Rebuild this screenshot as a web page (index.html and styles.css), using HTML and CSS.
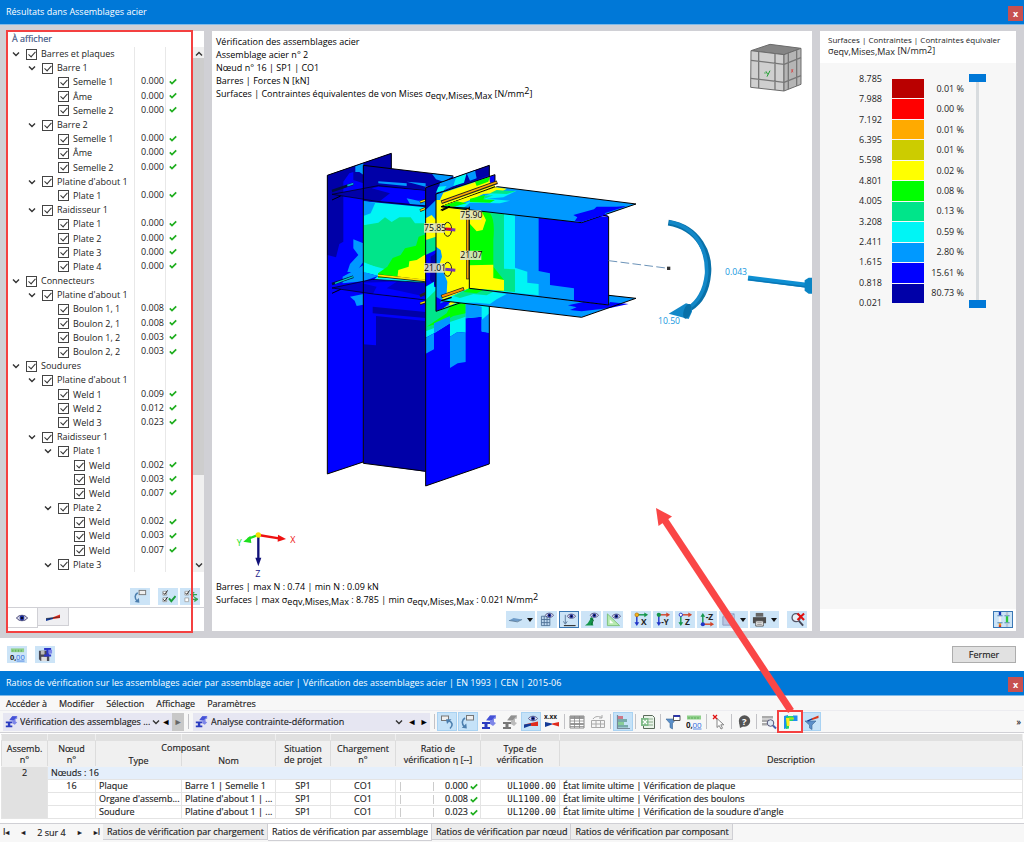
FILE: index.html
```html
<!DOCTYPE html>
<html lang="fr">
<head>
<meta charset="utf-8">
<meta name="viewport" content="width=device-width, initial-scale=1">
<title>Résultats dans Assemblages acier</title>
<link rel="stylesheet" href="styles.css">
</head>
<body>
<svg class="defs" aria-hidden="true">
  <symbol id="ok" viewBox="0 0 8 7"><path d="M.8 3.4 3 5.6 7.2 1.4" fill="none" stroke="#1fae1f" stroke-width="1.7"/></symbol>
  <symbol id="chev" viewBox="0 0 8 8"><path d="M1 2.5 4 5.5 7 2.5" fill="none" stroke="#333" stroke-width="1.4"/></symbol>
  <symbol id="eye" viewBox="0 0 12 8"><path d="M.5 4C3 .4 9 .4 11.5 4 9 7.6 3 7.6.5 4Z" fill="#dde" stroke="#336" stroke-width=".9"/><circle cx="6" cy="4" r="2.4" fill="#1d2f9c"/><circle cx="6" cy="4" r="1" fill="#000"/></symbol>
  <symbol id="diag" viewBox="0 0 16 16"><path d="M1 9.500 8 8.500v1.500L1 12Z" fill="#143a96"/><path d="M8 8.200 15 5.500V9L8 10Z" fill="#e02b1d"/><path d="M1 9.500 15 8" stroke="#222" stroke-width=".6"/></symbol>
  <symbol id="beam" viewBox="0 0 16 16"><path d="M1 8h8v2H6.500v3H9v2H1v-2h2.500v-3H1Z" fill="#2b3cc0"/><path d="M5 6.500 9 1.500h6v3l-2 .5v3l2 1-3 3-3-2V7Z" fill="#7d86e8"/><path d="M9 1.500h6L11 6H5.500Z" fill="#4552d6"/></symbol>
  <symbol id="beamgray" viewBox="0 0 16 16"><path d="M1 8h8v2H6.500v3H9v2H1v-2h2.500v-3H1Z" fill="#777"/><path d="M5 6.500 9 1.500h6v3l-2 .5v3l2 1-3 3-3-2V7Z" fill="#bbb"/><path d="M9 1.500h6L11 6H5.500Z" fill="#909090"/></symbol>
  <symbol id="digits" viewBox="0 0 16 16"><path d="M1 1.500h14v4H1Z" fill="#8fd08a"/><path d="M3 3v2M6 3v2M9 3v2M12 3v2" stroke="#4a9e48" stroke-width=".7"/><text x="0" y="13.500" font-size="8" font-weight="700" fill="#222">0,</text><text x="6.500" y="13.500" font-size="8" fill="#2f6de0">00</text><path d="M7 15h8.500" stroke="#2f6de0" stroke-width=".8"/></symbol>
  <symbol id="arrow-box" viewBox="0 0 16 16"><rect x="6.500" y="1.500" width="7" height="4.500" fill="#eee" stroke="#777"/><path d="M5 4C1.500 6 1.500 10 4.500 13" fill="none" stroke="#4d7fae" stroke-width="1.600"/><path d="M1.800 13.800 6.800 14.600 6.300 9.600Z" fill="#4d7fae"/></symbol>
  <symbol id="box-arrow" viewBox="0 0 16 16"><rect x="2.500" y="2" width="7" height="4.500" fill="#eee" stroke="#777"/><path d="M11 14.500c3.500-3 2.500-6.500-1.500-8" fill="none" stroke="#4d7fae" stroke-width="1.600"/><path d="M7 5.300h5.500L8 10Z" fill="#4d7fae"/></symbol>
  <symbol id="checks" viewBox="0 0 16 16"><path d="M2 2.500h4v4H2ZM2 9.500h4v4H2Z" fill="#fff" stroke="#888" stroke-width=".8"/><path d="M2.500 4 4 5.800 7 1.500M2.500 11 4 12.800 7 8.500" fill="none" stroke="#222"/><path d="M8.500 10 11 13l4.500-5.500" fill="none" stroke="#1a9d3a" stroke-width="2"/></symbol>
  <symbol id="toggles" viewBox="0 0 16 16"><path d="M2 2.500h4v4H2ZM2 9.500h4v4H2Z" fill="#fff" stroke="#999" stroke-width=".8"/><path d="M2.500 4 4 5.800 7 1.500" fill="none" stroke="#222"/><path d="M8 6h7M12 3.500 8.500 6l3.500 2M9 11h6M12 8.800l3.500 2.200-3.500 2.200" fill="none" stroke="#35a050" stroke-width="1.400"/></symbol>
  <symbol id="save" viewBox="0 0 16 16"><path d="M1 4h11v11H3l-2-2Z" fill="#4a4a55"/><path d="M3.500 10.500h6V15h-6Z" fill="#ddd"/><path d="M3 4h4v4H3Z" fill="#bbb"/><path d="M6.500 1H14v2.500h-2.500V8H14v2H6.500V8H9V3.500H6.500Z" fill="#2b35c8"/><path d="M11 3h4v4h-4Z" fill="#7d86e8"/></symbol>
  <symbol id="plane" viewBox="0 0 16 16"><path d="M1 9 6 6.500l9 1.500-5 2Z" fill="#6e9bc8"/><path d="M1 9 10 10.500 15 8" fill="none" stroke="#43617f" stroke-width=".7"/></symbol>
  <symbol id="grid-eye" viewBox="0 0 16 16"><path d="M1.500 4.500h9v10h-9ZM1.500 8h9M1.500 11.300h9M4.500 4.500v10M7.500 4.500v10" fill="#bcd6ee" stroke="#486c92" stroke-width=".9"/><use href="#eye" x="5" y="0" width="10" height="7"/></symbol>
  <symbol id="load-eye" viewBox="0 0 16 16"><path d="M3.500 3v9M1.500 10l2 3 2-3" fill="none" stroke="#59789a"/><path d="M2 14.500h12.500" stroke="#333" stroke-width="1.200"/><use href="#eye" x="5" y="1" width="10" height="7"/></symbol>
  <symbol id="support-eye" viewBox="0 0 16 16"><path d="M8 5.500c-1.500 0-1.500 2.500-1.500 2.500L4 12l-3 2.500h9L9 11l1-4Z" fill="#14964a"/><path d="m7 7 3 1.500-2 5" fill="none" stroke="#075e2a"/><use href="#eye" x="6" y="0" width="10" height="7"/></symbol>
  <symbol id="dim-eye" viewBox="0 0 16 16"><path d="M1.500 2v12.500h13Z" fill="#b6eab0" stroke="#7cc07a"/><path d="M4 8v4h4Z" fill="#fff"/><use href="#eye" x="6" y="1" width="10" height="7"/></symbol>
  <symbol id="axis-x" viewBox="0 0 16 16"><path d="M3 3h9" stroke="#14964a" stroke-width="1.500"/><path d="m11 .5 4 2.500-4 2.500Z" fill="#14964a"/><path d="M3 3v9" stroke="#2035c8" stroke-width="1.500"/><path d="m.5 11 2.500 4 2.500-4Z" fill="#2035c8"/><circle cx="3" cy="3" r="2" fill="#f6b21b" stroke="#b06d00" stroke-width=".7"/><text x="7.500" y="14" font-size="9" font-weight="700" fill="#222">X</text></symbol>
  <symbol id="axis-y" viewBox="0 0 16 16"><path d="M3 3h9" stroke="#d2452a" stroke-width="1.500"/><path d="m11 .5 4 2.500-4 2.500Z" fill="#d2452a"/><path d="M3 3v9" stroke="#2035c8" stroke-width="1.500"/><path d="m.5 11 2.500 4 2.500-4Z" fill="#2035c8"/><circle cx="3" cy="3" r="2.300" fill="#14964a"/><text x="5.500" y="13.500" font-size="8.500" font-weight="700" fill="#222">-Y</text></symbol>
  <symbol id="axis-z" viewBox="0 0 16 16"><path d="M3 3h9" stroke="#d2452a" stroke-width="1.500"/><path d="m11 .5 4 2.500-4 2.500Z" fill="#d2452a"/><path d="M3 3v9" stroke="#14964a" stroke-width="1.500"/><path d="m.5 11 2.500 4 2.500-4Z" fill="#14964a"/><circle cx="3" cy="3" r="1.800" fill="#fff" stroke="#2035c8"/><text x="7.500" y="14" font-size="9" font-weight="700" fill="#222">Z</text></symbol>
  <symbol id="axis-mz" viewBox="0 0 16 16"><path d="M3 13h9" stroke="#d2452a" stroke-width="1.500"/><path d="m11 10.500 4 2.500-4 2.500Z" fill="#d2452a"/><path d="M3 4v9" stroke="#14964a" stroke-width="1.500"/><path d="m.5 5 2.500-4L5.500 5Z" fill="#14964a"/><circle cx="3" cy="13" r="2.200" fill="#2035c8"/><text x="6" y="8.500" font-size="9" font-weight="700" fill="#222">-Z</text></symbol>
  <symbol id="iso" viewBox="0 0 16 16"><path d="M2 5h8v9H2Z" fill="#b9c5e2" stroke="#8d9cc0"/><path d="M2 5 6 2h8l-4 3M14 2v9l-4 3" fill="#dde4f5" stroke="#8d9cc0"/></symbol>
  <symbol id="printer" viewBox="0 0 16 16"><path d="M4 1h8v4H4Z" fill="#666"/><path d="M1 5.500h14V12H1Z" fill="#4c4c4c"/><path d="M4 9.500h8V15H4Z" fill="#fff" stroke="#555"/><path d="M5.500 11.500h5M5.500 13.200h5" stroke="#888"/></symbol>
  <symbol id="zoom-off" viewBox="0 0 16 16"><circle cx="6.500" cy="6" r="4.300" fill="#e8f1f8" stroke="#556" stroke-width="1.400"/><path d="m9.500 9.500 4.500 5" stroke="#445" stroke-width="2"/><path d="m8 1.500 7 7M15 1.500l-7 7" stroke="#e01010" stroke-width="2.200"/></symbol>
  <symbol id="limits" viewBox="0 0 16 16"><path d="M3 4.500h2.500V11H3Z" fill="#f3f3f3"/><path d="M3 0h2.500v3.500H3Z" fill="#1634b8"/><path d="M3 12h2.500v2H3Z" fill="#f90"/><path d="M3 14h2.500v2H3Z" fill="#d8381b"/><path d="M1.500 4h5.500M1.500 11.500h5.500M9 4h5.500M9 11.500h5.500" stroke="#4d7fae"/><path d="M10.500 0H13v3.500h-2.500ZM10.500 12H13v4h-2.500Z" fill="#b9c6d2"/><path d="M10.500 4.500H13V11h-2.500Z" fill="#2bc93d"/></symbol>
  <symbol id="diag-eye" viewBox="0 0 16 16"><path d="M1 10.500 15 7.500V12H9Z" fill="#e02b1d"/><path d="M1 10.500 8 9.500v2L1 14Z" fill="#143a96"/><use href="#eye" x="5" y="1" width="10" height="7"/></symbol>
  <symbol id="diag-xxx" viewBox="0 0 16 16"><path d="M8 9.500 15 8v4.500L8 10.500Z" fill="#e02b1d"/><path d="M1 8v5l7-2.500v-1Z" fill="#143a96"/><text x="0" y="5" font-size="6.500" font-weight="700" fill="#222">x.xx</text></symbol>
  <symbol id="table" viewBox="0 0 16 16"><path d="M1 2h14v12H1Z" fill="#fff" stroke="#888"/><path d="M1 2h14v3H1ZM1 9h14v2H1Z" fill="#999"/><path d="M5.500 2v12M10.500 2v12M1 7h14M1 12.500h14" stroke="#888" stroke-width=".8"/></symbol>
  <symbol id="table-new" viewBox="0 0 16 16"><path d="M1.500 6.500h13v7h-13ZM1.500 10h13M6 6.500v7M10.500 6.500v7" fill="#f5f5f5" stroke="#aaa"/><path d="M3 5c2-3 6-3 9-1.500M12 1v3H9" fill="none" stroke="#aaa"/></symbol>
  <symbol id="rows" viewBox="0 0 16 16"><path d="M2.500 1v13.500H15" fill="none" stroke="#789" stroke-width="1.200"/><path d="M3 2h5v3H3Z" fill="#c78"/><path d="M3 5h9v3H3ZM3 11h10v2.500H3Z" fill="#7aa"/><path d="M3 8h6v3H3Z" fill="#8c9"/></symbol>
  <symbol id="sheet" viewBox="0 0 16 16"><path d="M3.500 1.500h9l2 2v11h-11Z" fill="#e9f3e9" stroke="#5a6a5a"/><path d="M6 5h7M6 8h7M6 11h7" stroke="#8aab8a"/><path d="M1 4h7.500v8H1Z" fill="#7fba88"/><path d="m3 6 4 4M7 6l-4 4" stroke="#fff" stroke-width="1.200"/></symbol>
  <symbol id="funnel-box" viewBox="0 0 16 16"><path d="M1 5h10L7.500 9.500V15L5 13.500v-4Z" fill="#5b8fc9" stroke="#3a6796" stroke-width=".6"/><path d="M8.500 1.500h6.500v5H8.500Z" fill="#fff" stroke="#555"/><path d="M8.500 1h6.500v2H8.500Z" fill="#2b35a8"/></symbol>
  <symbol id="cursor" viewBox="0 0 16 16"><path d="M6 4.500v9l2.200-2 1.800 3.500 1.500-.8-1.700-3.400h3Z" fill="#fff" stroke="#777" stroke-width=".9"/><path d="m2 1 4 4M6 1 2 5" stroke="#e01010" stroke-width="1.300"/></symbol>
  <symbol id="help" viewBox="0 0 16 16"><circle cx="8.500" cy="7" r="5.700" fill="#555"/><path d="m3 8 1 6 4-2Z" fill="#555"/><text x="6" y="10.500" font-size="9.500" font-weight="700" fill="#fff">?</text></symbol>
  <symbol id="table-search" viewBox="0 0 16 16"><path d="M1 2h11v2.500H1ZM1 5.500h7V8H1ZM1 9h5v2.500H1Z" fill="#aaa"/><circle cx="9.500" cy="9" r="3.300" fill="#dce8f5" stroke="#557"/><path d="m12 11.500 3 3" stroke="#4a5fb0" stroke-width="2"/></symbol>
  <symbol id="joint" viewBox="0 0 16 16"><path d="M2 2 6 1v13l-4 1Z" fill="#1f8ff0"/><path d="M6 2h9v5H7v7.500L4 15V3Z" fill="#25d36a"/><path d="M4 4h3.500v8H5Z" fill="#ffe81f"/><path d="M11 1.500h4.500V7H11Z" fill="#1f8ff0"/><path d="M7 3.500h5v2H7Z" fill="#a6e61d"/></symbol>
  <symbol id="funnel-diag" viewBox="0 0 16 16"><path d="M2 7h11L9 11v4.500L6.500 14v-3Z" fill="#5b8fc9" stroke="#3a6796" stroke-width=".6"/><path d="M4 6.500 9.500 4v1.500L5 7.500Z" fill="#143a96"/><path d="M9 4.200 15.500 1.500v2.500L9 6Z" fill="#d8381b"/></symbol>
</svg>

<main class="app">
<section class="results">
  <header class="titlebar"><h1>Résultats dans Assemblages acier</h1><button class="close" aria-label="Fermer la fenêtre">x</button></header>
  <div class="workspace">
    <aside class="panel nav">
      <h2>À afficher</h2>
      <div class="tree-area">
        <ul class="tree">
          <li><svg class="chev"><use href="#chev"/></svg><label><input type="checkbox" checked>Barres et plaques</label></li>
          <li class="l1"><svg class="chev"><use href="#chev"/></svg><label><input type="checkbox" checked>Barre 1</label></li>
          <li class="l2"><label><input type="checkbox" checked>Semelle 1</label><output>0.000</output><svg class="ok"><use href="#ok"/></svg></li>
          <li class="l2"><label><input type="checkbox" checked>Âme</label><output>0.000</output><svg class="ok"><use href="#ok"/></svg></li>
          <li class="l2"><label><input type="checkbox" checked>Semelle 2</label><output>0.000</output><svg class="ok"><use href="#ok"/></svg></li>
          <li class="l1"><svg class="chev"><use href="#chev"/></svg><label><input type="checkbox" checked>Barre 2</label></li>
          <li class="l2"><label><input type="checkbox" checked>Semelle 1</label><output>0.000</output><svg class="ok"><use href="#ok"/></svg></li>
          <li class="l2"><label><input type="checkbox" checked>Âme</label><output>0.000</output><svg class="ok"><use href="#ok"/></svg></li>
          <li class="l2"><label><input type="checkbox" checked>Semelle 2</label><output>0.000</output><svg class="ok"><use href="#ok"/></svg></li>
          <li class="l1"><svg class="chev"><use href="#chev"/></svg><label><input type="checkbox" checked>Platine d'about 1</label></li>
          <li class="l2"><label><input type="checkbox" checked>Plate 1</label><output>0.000</output><svg class="ok"><use href="#ok"/></svg></li>
          <li class="l1"><svg class="chev"><use href="#chev"/></svg><label><input type="checkbox" checked>Raidisseur 1</label></li>
          <li class="l2"><label><input type="checkbox" checked>Plate 1</label><output>0.000</output><svg class="ok"><use href="#ok"/></svg></li>
          <li class="l2"><label><input type="checkbox" checked>Plate 2</label><output>0.000</output><svg class="ok"><use href="#ok"/></svg></li>
          <li class="l2"><label><input type="checkbox" checked>Plate 3</label><output>0.000</output><svg class="ok"><use href="#ok"/></svg></li>
          <li class="l2"><label><input type="checkbox" checked>Plate 4</label><output>0.000</output><svg class="ok"><use href="#ok"/></svg></li>
          <li><svg class="chev"><use href="#chev"/></svg><label><input type="checkbox" checked>Connecteurs</label></li>
          <li class="l1"><svg class="chev"><use href="#chev"/></svg><label><input type="checkbox" checked>Platine d'about 1</label></li>
          <li class="l2"><label><input type="checkbox" checked>Boulon 1, 1</label><output>0.008</output><svg class="ok"><use href="#ok"/></svg></li>
          <li class="l2"><label><input type="checkbox" checked>Boulon 2, 1</label><output>0.008</output><svg class="ok"><use href="#ok"/></svg></li>
          <li class="l2"><label><input type="checkbox" checked>Boulon 1, 2</label><output>0.003</output><svg class="ok"><use href="#ok"/></svg></li>
          <li class="l2"><label><input type="checkbox" checked>Boulon 2, 2</label><output>0.003</output><svg class="ok"><use href="#ok"/></svg></li>
          <li><svg class="chev"><use href="#chev"/></svg><label><input type="checkbox" checked>Soudures</label></li>
          <li class="l1"><svg class="chev"><use href="#chev"/></svg><label><input type="checkbox" checked>Platine d'about 1</label></li>
          <li class="l2"><label><input type="checkbox" checked>Weld 1</label><output>0.009</output><svg class="ok"><use href="#ok"/></svg></li>
          <li class="l2"><label><input type="checkbox" checked>Weld 2</label><output>0.012</output><svg class="ok"><use href="#ok"/></svg></li>
          <li class="l2"><label><input type="checkbox" checked>Weld 3</label><output>0.023</output><svg class="ok"><use href="#ok"/></svg></li>
          <li class="l1"><svg class="chev"><use href="#chev"/></svg><label><input type="checkbox" checked>Raidisseur 1</label></li>
          <li class="l2 parent"><svg class="chev"><use href="#chev"/></svg><label><input type="checkbox" checked>Plate 1</label></li>
          <li class="l3"><label><input type="checkbox" checked>Weld</label><output>0.002</output><svg class="ok"><use href="#ok"/></svg></li>
          <li class="l3"><label><input type="checkbox" checked>Weld</label><output>0.003</output><svg class="ok"><use href="#ok"/></svg></li>
          <li class="l3"><label><input type="checkbox" checked>Weld</label><output>0.007</output><svg class="ok"><use href="#ok"/></svg></li>
          <li class="l2 parent"><svg class="chev"><use href="#chev"/></svg><label><input type="checkbox" checked>Plate 2</label></li>
          <li class="l3"><label><input type="checkbox" checked>Weld</label><output>0.002</output><svg class="ok"><use href="#ok"/></svg></li>
          <li class="l3"><label><input type="checkbox" checked>Weld</label><output>0.003</output><svg class="ok"><use href="#ok"/></svg></li>
          <li class="l3"><label><input type="checkbox" checked>Weld</label><output>0.007</output><svg class="ok"><use href="#ok"/></svg></li>
          <li class="l2 parent"><svg class="chev"><use href="#chev"/></svg><label><input type="checkbox" checked>Plate 3</label></li>
        </ul>
        <div class="scroll"><svg class="chev up"><use href="#chev"/></svg><div class="track"><div class="thumb"></div></div><svg class="chev"><use href="#chev"/></svg></div>
      </div>
      <div class="nav-tools">
        <button class="tool" aria-label="Réduire"><svg><use href="#arrow-box"/></svg></button>
        <button class="tool" aria-label="Tout cocher"><svg><use href="#checks"/></svg></button>
        <button class="tool" aria-label="Inverser"><svg><use href="#toggles"/></svg></button>
      </div>
      <div class="nav-tabs">
        <button class="nav-tab active" aria-label="Affichage"><svg class="eye"><use href="#eye"/></svg></button>
        <button class="nav-tab" aria-label="Diagrammes"><svg><use href="#diag"/></svg></button>
      </div>
      <div class="mark mark-nav"></div>
    </aside>

    <section class="panel view">
      <div class="viewport">
        <svg class="model" viewBox="212 31 600 578" role="img" aria-label="Modèle de l'assemblage">
          <g transform="translate(310 140) scale(.3333)" stroke-linejoin="round">
            <!-- rear column flange -->
            <path fill="#0000ff" d="M52 106 244 40V250H160V966L52 1002Z"/>
            <path fill="#0000a8" d="M52 106 244 40V110L160 100V140L100 160V305L88 312 78 352 52 345Z"/>
            <path fill="#0000ff" d="M100 125 118 100 130 96V120L160 130V160L100 170Z"/>
            <path fill="#0099ff" d="M136 78 160 69V104L148 96 136 96ZM130 298 160 310V366L138 396H112L120 372 145 345 130 325Z"/>
            <path fill="#0099ff" d="M98 410 160 376V424L98 430ZM120 470 160 462V494L140 498 134 482Z"/>
            <!-- column web -->
            <path fill="#0000a8" d="M160 76 430 108V140H347V995L160 970Z"/>
            <path fill="#0099ff" d="M365 100 430 108 400 125 378 118ZM290 125 347 130V140Z"/>
            <path fill="#0099ff" d="M205 124 290 130V138L205 130Z"/>
            <path fill="#00f5f5" d="M160 184 347 202V440H160Z"/>
            <path fill="#0099ff" d="M160 184 196 188 182 220 160 228Z"/>
            <path fill="#00e58a" d="M160 256 205 248 225 232 245 246 268 232 302 232 315 250 347 250V420L160 370Z"/>
            <path fill="#00ff00" d="M347 283 326 290 318 317 285 325 272 345 248 354 232 380 204 400V414H347Z"/>
            <path fill="#ffff00" d="M347 343 320 360 298 364 296 380 265 390 262 414 347 422Z"/>
            <path fill="#0000ff" d="M160 395 204 408 180 430 347 470V543L198 528V616L160 613Z"/>
            <path fill="#0099ff" d="M160 395 204 408 160 424Z"/>
            <path fill="#00f5f5" d="M160 366 195 380 204 405 160 396Z"/>
            <path fill="#0000a8" d="M188 500 347 516V534L188 520Z"/>
            <!-- stiffeners -->
            <path fill="#0000a8" stroke="#000" stroke-width="2" d="M66 163 205 137 347 152V198L200 184Z"/>
            <path fill="#0000ff" d="M205 140 347 152V195L210 183 240 160 185 145Z"/>
            <path fill="#0000c8" stroke="#000" stroke-width="2" d="M66 444 188 418 347 428V480L190 462Z"/>
            <path fill="#0000ff" d="M150 428 260 425 230 445 280 455 347 470V478L190 460 200 440Z"/>
            <path fill="#0099ff" d="M290 175 325 182 347 180V196L300 192Z"/>
            <path stroke="#001040" stroke-width="8" d="M66 153 130 131M66 432 130 410"/>
            <path stroke="#00a8d8" stroke-width="5" d="M112 137 130 131"/><path stroke="#00c8b8" stroke-width="4" d="M75 430 130 410"/>
            <path stroke="#000" stroke-width="3" d="M66 180 92 168M66 460 92 448M160 76V970"/>
            <path stroke="#222" stroke-width="8" d="M204 407 347 423"/><path stroke="#ffe600" stroke-width="5" d="M204 406 347 421"/>
            <path stroke="#222" stroke-width="8" d="M330 187 347 180M330 212 347 205M330 468 347 460M330 492 347 486"/><path stroke="#ffe600" stroke-width="4" d="M331 186 345 181M331 211 345 206M331 490 345 486"/>
            <path fill="none" stroke="#000" stroke-width="3" d="M52 106 244 40V86M160 76 430 108M52 106V1002L160 966M160 970 347 994"/>
            <!-- front column flange -->
            <path fill="#0000ff" d="M347 143 538 76V972L347 1038Z"/>
            <path fill="#0000a8" d="M347 143 538 76V106L378 162V200L347 210Z"/>
            <path fill="#0099ff" d="M390 128 440 110 450 130 400 152 385 150ZM470 100 495 90 500 115 480 122ZM347 210 378 180V240L360 262 347 260Z"/>
            <path fill="#00f5f5" d="M438 112 470 100 462 128 430 138ZM385 140 410 138 400 152 378 158ZM347 258 378 240V330L347 330Z"/>
            <path fill="#ffff00" d="M347 235 365 225 378 240V300L360 312 347 300Z"/>
            <path fill="#00e58a" d="M347 300 378 290V330L347 345Z"/>
            <path fill="#0000a8" d="M362 350 378 340V440L360 420Z"/>
            <path fill="#00f5f5" d="M347 440 372 425V440L538 470V578L515 574V530L467 535V578L443 576 420 590V550L372 580 347 593Z"/>
            <path fill="#00e58a" d="M347 480 378 450V510L467 480V530L420 546 347 574V540Z"/>
            <path fill="#00ff00" d="M420 500 467 485V520L430 528 400 545 350 560 410 520Z"/>
            <path fill="#0099ff" d="M347 594 372 580V550L420 528V550L372 580V628L347 641ZM420 590 443 576 467 578V666L443 670 420 684ZM467 490 515 500V530L467 535ZM515 540V575L538 578V520Z"/>
            <path fill="none" stroke="#000" stroke-width="3" d="M347 143 538 76V972L347 1038Z"/>
            <!-- end plate -->
            <path fill="#ffff00" d="M378 162 555 104V440L378 514Z"/>
            <path fill="#0099ff" d="M378 162 540 108 520 118 400 158 390 180H378ZM378 320 392 330 396 350 386 380 400 395 412 425 410 460 396 475 420 495 378 514Z"/>
            <path fill="#0000ff" d="M538 110 555 104V128H540ZM378 470 395 480 378 514ZM378 495 440 470 400 505 378 514Z"/>
            <path fill="#00ff00" d="M495 125 540 110 535 125 500 138ZM450 480 478 465V478L440 494Z"/>
            <path fill="none" stroke="#000" stroke-width="3" d="M555 128V104L378 162V514L470 482"/>
            <path fill="none" stroke="#222" stroke-width="11" d="M394 187 562 127"/><path stroke="#ffaa00" stroke-width="5" d="M396 186 560 127"/>
            <path fill="none" stroke="#000" stroke-width="3" d="M394 200 555 140M392 210 420 198"/>
            <!-- beam web -->
            <path fill="#0000ff" d="M478 200 896 230V495L478 445Z"/>
            <path fill="#0099ff" d="M478 200 686 230V393L720 400V435L792 445V482L478 445Z"/>
            <path fill="#00f5f5" d="M478 200 615 220V383L652 395V428L686 432V466L478 445Z"/>
            <path fill="#00e58a" d="M478 200 582 222V386L615 388V456L478 445Z"/>
            <path fill="#00ff00" d="M478 200 540 220Q556 240 550 300V380L582 420V452L478 445Z"/>
            <path fill="#ffff00" d="M478 210 515 214 528 240 518 270 500 274 478 250ZM478 376 550 374V414L582 420V452L478 445Z"/>
            <!-- beam top flange -->
            <path fill="#0099ff" stroke="#000" stroke-width="3" d="M394 200 562 140 978 192 815 248Z"/>
            <path fill="#ffff00" d="M400 197 556 142 590 146 570 158 520 162 490 176 430 200Z"/>
            <path fill="#00f5f5" d="M510 173 545 160 620 152 580 172 530 176 600 182 570 190 480 188 460 204 430 202Z"/>
            <path fill="#00e58a" d="M560 150 618 154 590 162 540 160ZM510 168 550 166 520 178Z"/>
            <path fill="#00ff00" d="M480 176 525 165 520 178 555 180 540 188 480 186ZM400 197 440 184 470 190 430 200Z"/>
            <path fill="#0000ff" d="M815 246 870 229 895 228 884 220 940 202 948 198 920 200 860 200 852 208 790 225 802 232 794 244Z"/>
            <!-- beam bottom flange -->
            <path fill="#0099ff" d="M394 482 478 445 896 495V466L978 475 815 532Z"/>
            <path fill="#00f5f5" d="M394 482 478 445 590 462 560 478 540 492 500 488 450 488Z"/>
            <path fill="#00e58a" d="M478 445 550 455 530 466 490 462 450 474 430 468Z"/>
            <path fill="#00ff00" d="M478 445 520 450 500 460 460 456Z"/>
            <path fill="#0000ff" d="M815 514 900 504 956 492 900 486 896 495 820 486 774 496 800 502 780 510Z"/>
            <path fill="none" stroke="#000" stroke-width="3" d="M478 445 896 495V230L880 226M896 466 978 475 815 532 394 482M478 200V445"/>
            <path stroke="#222" stroke-width="10" d="M394 470 462 446"/><path stroke="#ff8c00" stroke-width="6" d="M396 469 460 447"/>
            <path stroke="#222" stroke-width="9" d="M473 205V418"/><path stroke="#f59a00" stroke-width="5" d="M473 207V416"/>
            <path fill="none" stroke="#000" stroke-width="4" d="M394 482 425 472M394 200 478 205M395 212 420 200"/>
            <!-- bolts and result labels -->
            <g fill="none" stroke="#222" stroke-width="3"><ellipse cx="413" cy="268" rx="12" ry="21"/><ellipse cx="413" cy="388" rx="12" ry="21"/></g>
            <path stroke="#7a36b0" stroke-width="9" d="M406 267 436 270M406 388 436 391"/><path stroke="#d80030" stroke-width="7" d="M406 267H424"/>
            <g fill="#e4e4c8" fill-opacity=".88"><path d="M342 250h62v28h-62ZM450 211h64v28h-64ZM450 332h64v28h-64ZM342 370h62v28h-62Z"/></g>
            <g class="label"><text x="342" y="273">75.85</text><text x="451" y="234">75.90</text><text x="451" y="355">21.07</text><text x="342" y="393">21.01</text></g>
          </g>
          <!-- member axis, moment and axial force -->
          <g transform="translate(480 170) scale(.3333)">
            <path d="M386 272 565 295" stroke="#6b93b8" stroke-width="3" stroke-dasharray="26 10"/><path d="M561 290h10v10h-10Z" fill="#333"/>
            <path d="M565 158C660 174 690 255 685 310 680 370 655 400 630 415" fill="none" stroke="#0870a8" stroke-width="17"/>
            <path d="M568 156C656 172 682 250 680 310 675 365 650 398 628 412" fill="none" stroke="#1288c8" stroke-width="11"/>
            <path d="M566 431 618 400Q640 404 636 425L626 447Z" fill="#1288c8"/><ellipse cx="622" cy="424" rx="11" ry="23" transform="rotate(18 622 424)" fill="#0870a8"/>
            <path d="M804 324 980 346" stroke="#0e8fd2" stroke-width="15"/><path d="M804 329 980 351" stroke="#0a76b4" stroke-width="4"/><path d="M974 331 986 323H998V371H986L974 362Z" fill="#0a84c4"/>
            <g class="force"><text x="735" y="314">0.043</text><text x="534" y="463">10.50</text></g>
          </g>
          <!-- coordinate triad -->
          <g transform="translate(210 500) scale(.3333)">
            <path d="M145 105 207 115" stroke="#e11" stroke-width="7"/><path d="m204 104 24 13-25 8Z" fill="#e11"/>
            <path d="m145 105-32 12" stroke="#1de01d" stroke-width="7"/><path d="m121 107-21 18 24 4Z" fill="#1de01d"/>
            <path d="M145 105v70" stroke="#101078" stroke-width="7"/><path d="m136 173 9 26 9-26Z" fill="#101078"/><circle cx="145" cy="105" r="8" fill="#f4e000"/>
            <g class="axis"><text x="241" y="128" fill="#e11">X</text><text x="80" y="137" fill="#1de01d">Y</text><text x="136" y="231" fill="#20208a">Z</text></g>
          </g>
          <!-- view cube -->
          <g transform="translate(740 0) scale(.3333)" stroke="#6b6b6b" stroke-width="3" stroke-linejoin="round">
            <path d="M33 152 90 133 183 145 132 164Z" fill="#858585"/><path d="M33 152 132 164V273L32 262Z" fill="#cfcfcf"/><path d="M132 164 183 145V253L132 273Z" fill="#b5b5b5"/>
            <path d="M33 181 132 193 183 173M32 235 132 247 183 227M56 155V264M105 161V270M145 159V268M170 150V258" fill="none" stroke="#777" stroke-width="4"/>
            <path d="m78 214 5 9M90 212l-9 18M73 219h4" fill="none" stroke="#20a030" stroke-width="3"/><path d="m154 208 5 9m0-10-5 11" stroke="#d33" stroke-width="2"/>
          </g>
        </svg>
        <div class="info">
          <p>Vérification des assemblages acier</p><p>Assemblage acier n° 2</p><p>Nœud n° 16 | SP1 | CO1</p><p>Barres | Forces N [kN]</p>
          <p>Surfaces | Contraintes équivalentes de von Mises σ<sub>eqv,Mises,Max</sub> [N/mm<sup>2</sup>]</p>
        </div>
        <div class="info">
          <p>Barres | max N : 0.74 | min N : 0.09 kN</p>
          <p>Surfaces | max σ<sub>eqv,Mises,Max</sub> : 8.785 | min σ<sub>eqv,Mises,Max</sub> : 0.021 N/mm<sup>2</sup></p>
        </div>
      </div>
      <div class="view-tools">
        <button class="tool wide" aria-label="Plan"><svg><use href="#plane"/></svg><i></i></button>
        <button class="tool" aria-label="Maillage"><svg><use href="#grid-eye"/></svg></button>
        <button class="tool on" aria-label="Charges"><svg><use href="#load-eye"/></svg></button>
        <button class="tool" aria-label="Appuis"><svg><use href="#support-eye"/></svg></button>
        <button class="tool" aria-label="Cotes"><svg><use href="#dim-eye"/></svg></button>
        <span class="space"></span>
        <button class="tool" aria-label="Vue X"><svg><use href="#axis-x"/></svg></button>
        <button class="tool" aria-label="Vue -Y"><svg><use href="#axis-y"/></svg></button>
        <button class="tool" aria-label="Vue Z"><svg><use href="#axis-z"/></svg></button>
        <button class="tool" aria-label="Vue -Z"><svg><use href="#axis-mz"/></svg></button>
        <button class="tool wide" aria-label="Vue isométrique"><svg><use href="#iso"/></svg><i></i></button>
        <button class="tool wide" aria-label="Imprimer"><svg><use href="#printer"/></svg><i></i></button>
        <span class="space"></span>
        <button class="tool" aria-label="Réinitialiser le zoom"><svg><use href="#zoom-off"/></svg></button>
      </div>
    </section>

    <aside class="panel scale">
      <div class="scale-head"><p class="quantity">Surfaces | Contraintes | Contraintes équivaler</p><p>σ<sub>eqv,Mises,Max</sub> [N/mm<sup>2</sup>]</p></div>
      <div class="scale-body">
        <div class="legend">
          <ul class="values"><li>8.785</li><li>7.988</li><li>7.192</li><li>6.395</li><li>5.598</li><li>4.801</li><li>4.005</li><li>3.208</li><li>2.411</li><li>1.615</li><li>0.818</li><li>0.021</li></ul>
          <ul class="swatches"><li class="c1"></li><li class="c2"></li><li class="c3"></li><li class="c4"></li><li class="c5"></li><li class="c6"></li><li class="c7"></li><li class="c8"></li><li class="c9"></li><li class="c10"></li><li class="c11"></li></ul>
          <ul class="shares"><li>0.01 %</li><li>0.00 %</li><li>0.01 %</li><li>0.01 %</li><li>0.02 %</li><li>0.08 %</li><li>0.13 %</li><li>0.59 %</li><li>2.80 %</li><li>15.61 %</li><li>80.73 %</li></ul>
          <div class="range"><input type="range" min="0" max="100" value="100" aria-label="Limite supérieure"><input type="range" min="0" max="100" value="0" aria-label="Limite inférieure"></div>
        </div>
      </div>
      <div class="scale-foot"><button class="tool on" aria-label="Options de l'échelle"><svg><use href="#limits"/></svg></button></div>
    </aside>
  </div>
  <footer class="dialog-foot">
    <button class="tool" aria-label="Unités"><svg><use href="#digits"/></svg></button>
    <button class="tool" aria-label="Enregistrer"><svg><use href="#save"/></svg></button>
    <button class="push">Fermer</button>
  </footer>
</section>

<section class="ratios">
  <header class="titlebar"><h1>Ratios de vérification sur les assemblages acier par assemblage acier | Vérification des assemblages acier | EN 1993 | CEN | 2015-06</h1><button class="close" aria-label="Fermer le tableau">x</button></header>
  <nav class="menu"><button>Accéder à</button><button>Modifier</button><button>Sélection</button><button>Affichage</button><button>Paramètres</button></nav>
  <div class="toolbar">
    <div class="combo first"><svg><use href="#beam"/></svg><select aria-label="Module"><option>Vérification des assemblages ...</option></select><svg class="chev"><use href="#chev"/></svg></div>
    <button class="step" aria-label="Module précédent">◂</button><button class="step dim" aria-label="Module suivant">▸</button>
    <span class="sep wide"></span>
    <div class="combo second"><svg><use href="#beam"/></svg><select aria-label="Analyse"><option>Analyse contrainte-déformation</option></select><svg class="chev"><use href="#chev"/></svg></div>
    <button class="step" aria-label="Analyse précédente">◂</button><button class="step" aria-label="Analyse suivante">▸</button>
    <span class="sep"></span>
    <div class="icons">
      <button class="hot" aria-label="Sélection vers graphique"><svg><use href="#box-arrow"/></svg></button>
      <button class="hot" aria-label="Sélection vers tableau"><svg><use href="#arrow-box"/></svg></button>
      <button aria-label="Assemblages"><svg><use href="#beam"/></svg></button>
      <button aria-label="Assemblages inactifs"><svg><use href="#beamgray"/></svg></button>
      <button class="hot" aria-label="Afficher les résultats"><svg><use href="#diag-eye"/></svg></button>
      <button aria-label="Valeurs"><svg><use href="#diag-xxx"/></svg></button>
      <span class="sep"></span>
      <button aria-label="Tableau"><svg><use href="#table"/></svg></button>
      <button aria-label="Nouveau tableau"><svg><use href="#table-new"/></svg></button>
      <span class="sep"></span>
      <button class="hot" aria-label="Barres de couleur"><svg><use href="#rows"/></svg></button>
      <span class="sep"></span>
      <button aria-label="Exporter"><svg><use href="#sheet"/></svg></button>
      <span class="sep"></span>
      <button aria-label="Filtre"><svg><use href="#funnel-box"/></svg></button>
      <button aria-label="Décimales"><svg><use href="#digits"/></svg></button>
      <span class="sep"></span>
      <button aria-label="Désélectionner"><svg><use href="#cursor"/></svg></button>
      <span class="sep"></span>
      <button aria-label="Aide"><svg><use href="#help"/></svg></button>
      <span class="sep"></span>
      <button aria-label="Détails"><svg><use href="#table-search"/></svg></button>
      <button class="target" aria-label="Résultats dans Assemblages acier"><svg><use href="#joint"/></svg><span class="mark mark-tool"></span>
        <svg class="pointer" viewBox="0 0 144 206" aria-hidden="true"><path d="M8 11 135 203" stroke="#fa4646" stroke-width="7"/><path d="M0 0 16 8.500 2.500 18Z" fill="#fa4646"/></svg></button>
      <button class="hot" aria-label="Filtre des diagrammes"><svg><use href="#funnel-diag"/></svg></button>
    </div>
    <button class="more" aria-label="Plus">»</button>
  </div>
  <div class="table-wrap">
  <table>
    <colgroup><col class="w1"><col class="w2"><col class="w3"><col class="w4"><col class="w5"><col class="w6"><col class="w7"><col class="w8"><col></colgroup>
    <thead>
      <tr class="strip"><td></td><td></td><td></td><td></td><td></td><td></td><td></td><td></td><td></td></tr>
      <tr><th rowspan="2">Assemb.<br>n°</th><th rowspan="2">Nœud<br>n°</th><th colspan="2" class="group">Composant</th><th rowspan="2">Situation<br>de projet</th><th rowspan="2">Chargement<br>n°</th><th rowspan="2">Ratio de<br>vérification η [--]</th><th rowspan="2">Type de<br>vérification</th><th rowspan="2" class="low">Description</th></tr>
      <tr><th class="sub">Type</th><th>Nom</th></tr>
    </thead>
    <tbody>
      <tr class="node"><th rowspan="4">2</th><td colspan="8">Nœuds : 16</td></tr>
      <tr><td class="mid">16</td><td>Plaque</td><td>Barre 1 | Semelle 1</td><td class="mid">SP1</td><td class="mid">CO1</td><td class="ratio"><div><i></i>0.000<svg class="ok"><use href="#ok"/></svg></div></td><td class="code">UL1000.00</td><td class="desc">État limite ultime | Vérification de plaque</td></tr>
      <tr><td></td><td>Organe d'assemb...</td><td>Platine d'about 1 | ...</td><td class="mid">SP1</td><td class="mid">CO1</td><td class="ratio"><div><i></i>0.008<svg class="ok"><use href="#ok"/></svg></div></td><td class="code">UL1100.00</td><td class="desc">État limite ultime | Vérification des boulons</td></tr>
      <tr><td></td><td>Soudure</td><td>Platine d'about 1 | ...</td><td class="mid">SP1</td><td class="mid">CO1</td><td class="ratio"><div><i></i>0.023<svg class="ok"><use href="#ok"/></svg></div></td><td class="code">UL1200.00</td><td class="desc">État limite ultime | Vérification de la soudure d'angle</td></tr>
    </tbody>
  </table>
  </div>
  <div class="tabs">
    <div class="pager"><button aria-label="Premier">I◂</button><button aria-label="Précédent">◂</button><span>2 sur 4</span><button aria-label="Suivant">▸</button><button aria-label="Dernier">▸I</button></div>
    <button class="tab">Ratios de vérification par chargement</button><button class="tab active">Ratios de vérification par assemblage</button><button class="tab">Ratios de vérification par nœud</button><button class="tab">Ratios de vérification par composant</button>
  </div>
</section>
</main>
</body>
</html>
```
FILE: styles.css
```css
* { box-sizing: border-box; }
body { margin: 0; color: #1c1c1c; background: #fff; font: 9px/12px "Open Sans", "Noto Sans", sans-serif; }
h1, h2, p, ul { margin: 0; padding: 0; font: inherit; list-style: none; }
button, select, input { margin: 0; padding: 0; border: 0; background: none; color: inherit; font: inherit; }
svg { display: block; flex: none; width: 16px; height: 16px; }
.defs { display: none; }
.app { display: flex; flex-direction: column; min-height: 100vh; overflow: hidden; }
.results { flex: 1; display: flex; flex-direction: column; }

.titlebar { display: flex; align-items: center; justify-content: space-between; height: 25px; padding: 0 1px 0 6px; background: #0078d7; color: #fff; border-bottom: 1px solid #7fb9e8; }
.close { width: 15px; height: 15px; margin-top: 3px; background: #c75050; color: #fff; font-weight: 700; line-height: 12px; }

.workspace { flex: 1; display: grid; grid-template-columns: 197px 1fr 196px; gap: 8px; padding: 6px 8px 7px 7px; background: #d0d0d5; }
.panel { position: relative; display: flex; flex-direction: column; min-width: 0; background: #fff; }

.nav h2 { height: 16px; padding: 2px 0 0 5px; color: #3f5784; -webkit-text-stroke: 0.2px #3f5784; }
.tree-area { flex: 1; display: flex; }
.tree { flex: 1; display: flex; flex-direction: column; padding-left: 5px; background: linear-gradient(#e8e8e8, #e8e8e8) 127px 0 / 1px 100% no-repeat, linear-gradient(#e8e8e8, #e8e8e8) 158px 0 / 1px 100% no-repeat; }
.tree li { flex: 1 1 14px; display: flex; align-items: center; }
.tree .chev { margin-right: 6px; }
.chev { width: 8px; height: 8px; }
.tree .l1 { padding-left: 16px; }
.tree .l2 { padding-left: 46px; }
.tree .parent { padding-left: 32px; }
.tree .l3 { padding-left: 62px; }
.tree label { display: flex; align-items: center; gap: 4px; white-space: nowrap; }
.tree input { appearance: none; width: 11px; height: 11px; border: 1px solid #444; background: #fff; }
.tree input:checked::after { content: ""; display: block; width: 3px; height: 6px; margin: 0 auto; border: solid #333; border-width: 0 1px 1px 0; transform: rotate(42deg); }
.tree output { margin-left: auto; padding-bottom: 2px; }
.ok { width: 8px; height: 7px; }
.tree .ok { margin: 0 16px 2px 5px; }
.scroll { display: flex; flex-direction: column; align-items: center; width: 11px; padding: 3px 0; background: #f0f0f0; }
.up { transform: scaleY(-1); }
.track { flex: 1; width: 100%; }
.thumb { height: 83%; background: #cdcdcd; }
.nav-tools { display: flex; gap: 2px; justify-content: flex-end; padding: 16px 4px 2px 0; }
.nav-tools .tool:first-child { margin-right: 6px; }
.nav-tabs { display: flex; height: 24px; border-top: 1px solid #d0d0d5; }
.nav-tab { display: grid; place-items: center; width: 31px; height: 18px; background: #efeff2; border: solid #d0d0d5; border-width: 0 1px 1px 0; }
.nav-tab.active { height: 20px; background: #fff; }
.eye { width: 12px; height: 8px; }
.mark { position: absolute; border: 2px solid #f44040; pointer-events: none; }
.mark-nav { inset: -1px 11px -2px -1px; }

.tool { display: flex; align-items: center; justify-content: center; width: 20px; height: 17px; background: #cce4f7; }
.tool svg { width: 15px; height: 15px; }
.tool.wide { width: 29px; gap: 4px; }
.tool i { border: solid transparent; border-width: 4px 3px 0; border-top-color: #111; }
.tool.on { border: 1px solid #3a78b5; }

.viewport { flex: 1; position: relative; display: flex; flex-direction: column; justify-content: space-between; padding: 4px 4px 3px; color: #000; }
.info { position: relative; }
.info p { white-space: nowrap; height: 13px; line-height: 13px; }
sub, sup { font-size: inherit; line-height: 0; }
sub { vertical-align: -2px; }
sup { vertical-align: 3px; }
.model { position: absolute; inset: 0; width: 100%; height: 100%; }
.label { font-size: 26px; fill: #000; }
.force { font-size: 26px; fill: #1698e0; }
.axis { font-size: 27px; }
.view-tools { display: flex; gap: 2px; align-items: center; justify-content: flex-end; height: 22px; padding: 0 5px 1px 0; }
.space { width: 4px; }

.scale { background: #f7f7f7; }
.scale-head { height: 32px; padding: 3px 0 0 8px; background: #fff; }
.scale-head p { height: 12px; white-space: nowrap; }
.scale-head .quantity { height: 11px; font-size: 8px; }
.scale-head sub { vertical-align: -1px; }
.scale-head sup { vertical-align: 1px; }
.scale-body { flex: 1; padding: 10px 30px 0 38px; }
.legend { display: grid; grid-template-columns: 24px 42px 1fr 17px; align-items: center; height: 236px; }
.values { display: flex; flex-direction: column; justify-content: space-between; height: 100%; text-align: right; white-space: nowrap; }
.swatches, .shares { display: grid; grid-auto-rows: 1fr; height: 225px; }
.swatches { gap: 1px; padding-left: 10px; }
.shares { text-align: right; align-items: center; padding-right: 5px; white-space: nowrap; }
.c1 { background: #b90000; } .c2 { background: #f00; } .c3 { background: #fa0; } .c4 { background: #cccc00; }
.c5 { background: #ff0; } .c6 { background: #0f0; } .c7 { background: #00e58a; } .c8 { background: #00f5f5; }
.c9 { background: #0099ff; } .c10 { background: #00f; } .c11 { background: #0000a8; }
.range { position: relative; height: 234px; background: linear-gradient(#d8dcdf, #d8dcdf) center / 3px 100% no-repeat; }
.range input { position: absolute; inset: 0; width: 17px; height: 100%; appearance: none; writing-mode: vertical-lr; direction: rtl; pointer-events: none; }
.range input::-webkit-slider-thumb { appearance: none; width: 17px; height: 8px; background: #0078d7; pointer-events: auto; }
.scale-foot { display: flex; justify-content: flex-end; align-items: center; height: 22px; padding: 0 3px 1px 0; background: #fff; }

.dialog-foot { display: flex; gap: 8px; align-items: center; height: 33px; padding: 0 8px 0 7px; }
.push { width: 64px; height: 17px; margin-left: auto; background: #e1e1e1; border: 1px solid #adadad; line-height: 14px; }

.ratios { background: #f7f7f7; }
.ratios, .push { -webkit-text-stroke: 0.15px currentColor; }
.ratios .titlebar { -webkit-text-stroke: 0; }
.menu { display: flex; gap: 12px; height: 14px; padding-left: 6px; }
.menu button { height: 15px; }
.toolbar { display: flex; align-items: center; height: 22px; padding-left: 3px; border-top: 1px solid #ececf0; }
.combo { display: flex; align-items: center; gap: 3px; height: 18px; padding: 0 3px 0 2px; background: #e6e6f2; }
.combo svg:first-child { width: 13px; height: 13px; }
.combo select { flex: 1; min-width: 0; appearance: none; }
.first { width: 157px; gap: 2px; padding-right: 0; }
.second { width: 213px; }
.step { width: 12px; height: 18px; background: #e6e6f2; font: 10px/12px "DejaVu Sans", sans-serif; color: #000; }
.step.dim { background: #c8c8c8; color: #666; }
.sep { width: 1px; height: 15px; margin: 0 1px; background: #c2c2c6; }
.toolbar > .sep { margin-left: 4px; }
.toolbar > .wide { margin: 0 4px; }
.icons { display: flex; align-items: center; gap: 1px; margin-left: 1px; }
.icons button { display: grid; place-items: center; width: 20px; height: 19px; }
.icons .hot { background: #c5e2f8; box-shadow: inset 0 0 0 1px #a9d2f2; }
.icons .target { position: relative; }
.mark-tool { inset: -2px -3px; }
.pointer { position: absolute; right: 0; bottom: 17px; width: 144px; height: 206px; pointer-events: none; }
.more { margin-left: auto; padding-right: 3px; }

.table-wrap { height: 92px; padding: 1px 1px 0; background: #fff; border: solid #d0d0d5; border-width: 1px 0; }
table { width: 100%; table-layout: fixed; border-collapse: collapse; }
.w1 { width: 46px; } .w2 { width: 48px; } .w3 { width: 86px; } .w4 { width: 94px; } .w5 { width: 55px; } .w6 { width: 65px; } .w7 { width: 85px; } .w8 { width: 79px; }
th, td { height: 13px; padding: 0 3px; border: 1px solid #e4e4e4; font-weight: 400; line-height: 12px; white-space: nowrap; text-align: left; }
thead th { padding: 1px 0 0; text-align: center; line-height: 11px; background: #f0f0f0; border-color: #f0f0f0 #dcdcdc; }
thead .group { border-bottom: 0; }
thead .low { vertical-align: bottom; padding-bottom: 1px; }
.strip td { height: 6px; line-height: 5px; background: #e0e0e0; border-color: #e0e0e0 #efefef; }
tbody th { text-align: center; vertical-align: top; background: #e1e1e1; }
.node td { background: #e5effb; }
td.mid { text-align: center; }
td.ratio { padding: 0 2px 0 4px; }
.ratio div { display: flex; align-items: center; justify-content: flex-end; gap: 2px; }
.ratio i { width: 34px; height: 9px; margin-right: auto; border: solid #ccc; border-width: 0 1px; }
td.code { font-family: "DejaVu Sans Mono", monospace; text-align: right; -webkit-text-stroke: 0; }
.tabs { display: flex; height: 18px; }
.pager { display: flex; align-items: center; width: 103px; padding: 0 3px; justify-content: space-between; }
.pager button { font: 8px/12px "DejaVu Sans", sans-serif; }
.tab { height: 16px; padding: 0 3px 0 4px; background: #ececec; border: solid #cfcfd4; border-width: 0 1px 1px 0; white-space: nowrap; }
.tab.active { height: 17px; background: #fff; }
```
